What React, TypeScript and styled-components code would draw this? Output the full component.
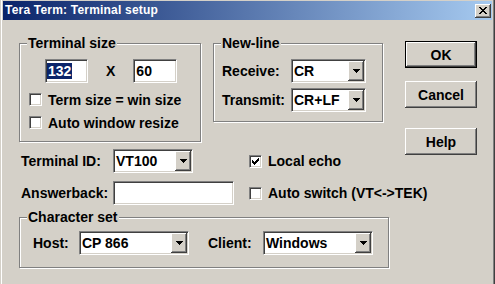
import React from 'react';
import styled, { createGlobalStyle, css } from 'styled-components';

const face = '#d4d0c8';

const GlobalStyle = createGlobalStyle`
  html, body {
    margin: 0;
    padding: 0;
    background: ${face};
  }
  body {
    font-family: 'Liberation Sans', Arial, sans-serif;
  }
`;

const sunken = css`
  box-sizing: border-box;
  background: #fff;
  border: 1px solid;
  border-color: #808080 #fff #fff #808080;
  box-shadow: inset 1px 1px #404040, inset -1px -1px ${face};
`;

const raised = css`
  box-sizing: border-box;
  background: ${face};
  box-shadow: inset -1px -1px #404040, inset 1px 1px #fff,
    inset -2px -2px #808080, inset 2px 2px ${face};
`;

const Window = styled.div`
  width: 495px;
  height: 284px;
  box-sizing: border-box;
  padding: 1px 3px 0 3px;
  background: ${face};
  box-shadow: inset 1px 0 ${face}, inset 2px 0 #fff, inset -1px 0 #404040,
    inset -2px 0 #808080;
  overflow: hidden;
  font: bold 14px 'Liberation Sans', Arial, sans-serif;
  color: #000;
`;

const TitleBar = styled.div`
  height: 19px;
  display: flex;
  align-items: center;
  padding: 0 1px 0 2px;
  background: linear-gradient(to right, #0a246a, #a6caf0);
`;

const TitleText = styled.span`
  flex: 1;
  color: #fff;
  font-size: 12px;
  letter-spacing: 0.2px;
  line-height: 19px;
  white-space: nowrap;
`;

const CloseButton = styled.div`
  ${raised}
  width: 16px;
  height: 14px;
  display: flex;
  align-items: center;
  justify-content: center;
`;

const Content = styled.div`
  padding: 21px 0 0 16px;
`;

const TopSection = styled.div`
  display: flex;
  align-items: flex-start;
`;

const LeftArea = styled.div`
  width: 364px;
  padding-top: 2px;
  display: flex;
  flex-direction: column;
`;

const GroupsRow = styled.div`
  display: flex;
  gap: 12px;
  align-items: flex-start;
`;

const GroupBox = styled.div<{ $w: number; $h: number; $top?: number }>`
  position: relative;
  box-sizing: border-box;
  width: ${(p) => p.$w}px;
  height: ${(p) => p.$h}px;
  margin-top: ${(p) => p.$top || 0}px;
  border: 1px solid #808080;
  box-shadow: inset 1px 1px #fff, 1px 1px #fff;
`;

const Legend = styled.span`
  position: absolute;
  top: -9px;
  left: 7px;
  padding: 0 1px;
  line-height: 16px;
  background: ${face};
  white-space: nowrap;
`;

const SizeInputs = styled.div`
  display: flex;
  align-items: center;
  gap: 18px;
  margin: 15px 0 0 25px;
`;

const TextBox = styled.div<{ $w: number }>`
  ${sunken}
  width: ${(p) => p.$w}px;
  height: 24px;
  display: flex;
  align-items: center;
  padding-left: 1px;
  line-height: 16px;
`;

const Selected = styled.span`
  background: #0a246a;
  color: #fff;
  padding: 0 1px;
`;

const CheckRow = styled.div<{ $left?: number; $top?: number }>`
  display: flex;
  align-items: center;
  height: 13px;
  margin-left: ${(p) => p.$left || 0}px;
  margin-top: ${(p) => p.$top || 0}px;
  line-height: 16px;
  white-space: nowrap;
`;

const Check = styled.span`
  ${sunken}
  width: 13px;
  height: 13px;
  margin-right: 6px;
  flex: none;
  display: flex;
  align-items: center;
  justify-content: center;
`;

const NewLineGrid = styled.div`
  display: grid;
  grid-template-columns: 69px 75px;
  grid-auto-rows: 24px;
  row-gap: 5px;
  align-items: center;
  padding: 15px 0 0 8px;
`;

const Combo = styled.div<{ $w: number }>`
  ${sunken}
  width: ${(p) => p.$w}px;
  height: 24px;
  padding: 1px;
  display: flex;
`;

const ComboText = styled.span`
  flex: 1;
  display: flex;
  align-items: center;
  padding-left: 1px;
  line-height: 16px;
  white-space: nowrap;
`;

const DropButton = styled.span`
  ${raised}
  width: 16px;
  display: flex;
  align-items: center;
  justify-content: center;
`;

const ButtonColumn = styled.div`
  margin-left: 22px;
  display: flex;
  flex-direction: column;
`;

const PushButton = styled.div<{ $top?: number; $default?: boolean }>`
  ${raised}
  width: 72px;
  height: 27px;
  margin-top: ${(p) => p.$top || 0}px;
  display: flex;
  align-items: center;
  justify-content: center;
  line-height: 16px;
  border: ${(p) => (p.$default ? '1px solid #000' : 'none')};
`;

const MiddleGrid = styled.div`
  display: grid;
  grid-template-columns: 92px 136px auto;
  grid-auto-rows: 24px;
  row-gap: 8px;
  align-items: center;
  margin-top: 7px;
  padding-left: 2px;
`;

const FieldLabel = styled.span<{ $w?: number; $ml?: number }>`
  width: ${(p) => (p.$w ? `${p.$w}px` : 'auto')};
  margin-left: ${(p) => p.$ml || 0}px;
  flex: none;
  line-height: 16px;
  white-space: nowrap;
`;

const CharRow = styled.div`
  display: flex;
  align-items: center;
  padding: 13px 0 0 13px;
`;

const Arrow = () => (
  <svg width="7" height="4" viewBox="0 0 7 4" shapeRendering="crispEdges">
    <path d="M0 0h7v1H0zM1 1h5v1H1zM2 2h3v1H2zM3 3h1v1H3z" fill="#000" />
  </svg>
);

const CheckMark = () => (
  <svg width="7" height="7" viewBox="0 0 7 7" shapeRendering="crispEdges">
    <path
      d="M0 2h1v3H0zM1 3h1v3H1zM2 4h1v3H2zM3 3h1v3H3zM4 2h1v3H4zM5 1h1v3H5zM6 0h1v3H6z"
      fill="#000"
    />
  </svg>
);

const CloseGlyph = () => (
  <svg width="8" height="7" viewBox="0 0 8 7" shapeRendering="crispEdges">
    <path
      d="M0 0h2v1H0zM6 0h2v1H6zM1 1h2v1H1zM5 1h2v1H5zM2 2h4v1H2zM3 3h2v1H3zM2 4h4v1H2zM1 5h2v1H1zM5 5h2v1H5zM0 6h2v1H0zM6 6h2v1H6z"
      fill="#000"
    />
  </svg>
);

const ComboBox = ({ width, value }: { width: number; value: string }) => (
  <Combo $w={width}>
    <ComboText>{value}</ComboText>
    <DropButton>
      <Arrow />
    </DropButton>
  </Combo>
);

const CheckBox = ({
  label,
  checked,
  left,
  top,
}: {
  label: string;
  checked?: boolean;
  left?: number;
  top?: number;
}) => (
  <CheckRow $left={left} $top={top}>
    <Check>{checked && <CheckMark />}</Check>
    {label}
  </CheckRow>
);

export default function App() {
  return (
    <>
      <GlobalStyle />
      <Window>
        <TitleBar>
          <TitleText>Tera Term: Terminal setup</TitleText>
          <CloseButton>
            <CloseGlyph />
          </CloseButton>
        </TitleBar>
        <Content>
          <TopSection>
            <LeftArea>
              <GroupsRow>
                <GroupBox $w={182} $h={99}>
                  <Legend>Terminal size</Legend>
                  <SizeInputs>
                    <TextBox $w={43}>
                      <Selected>132</Selected>
                    </TextBox>
                    <span>X</span>
                    <TextBox $w={44}>
                      <span style={{ paddingLeft: 1 }}>60</span>
                    </TextBox>
                  </SizeInputs>
                  <CheckBox label="Term size = win size" left={9} top={10} />
                  <CheckBox label="Auto window resize" left={9} top={10} />
                </GroupBox>
                <GroupBox $w={170} $h={79}>
                  <Legend>New-line</Legend>
                  <NewLineGrid>
                    <FieldLabel>Receive:</FieldLabel>
                    <ComboBox width={75} value="CR" />
                    <FieldLabel>Transmit:</FieldLabel>
                    <ComboBox width={75} value="CR+LF" />
                  </NewLineGrid>
                </GroupBox>
              </GroupsRow>
              <MiddleGrid>
                <FieldLabel>Terminal ID:</FieldLabel>
                <ComboBox width={80} value="VT100" />
                <CheckBox label="Local echo" checked />
                <FieldLabel>Answerback:</FieldLabel>
                <TextBox $w={121} />
                <CheckBox label={'Auto switch (VT<->TEK)'} />
              </MiddleGrid>
            </LeftArea>
            <ButtonColumn>
              <PushButton $default>OK</PushButton>
              <PushButton $top={13}>Cancel</PushButton>
              <PushButton $top={20}>Help</PushButton>
            </ButtonColumn>
          </TopSection>
          <GroupBox $w={370} $h={51} $top={12}>
            <Legend>Character set</Legend>
            <CharRow>
              <FieldLabel $w={46}>Host:</FieldLabel>
              <ComboBox width={110} value="CP 866" />
              <FieldLabel $w={55} $ml={19}>
                Client:
              </FieldLabel>
              <ComboBox width={110} value="Windows" />
            </CharRow>
          </GroupBox>
        </Content>
      </Window>
    </>
  );
}
